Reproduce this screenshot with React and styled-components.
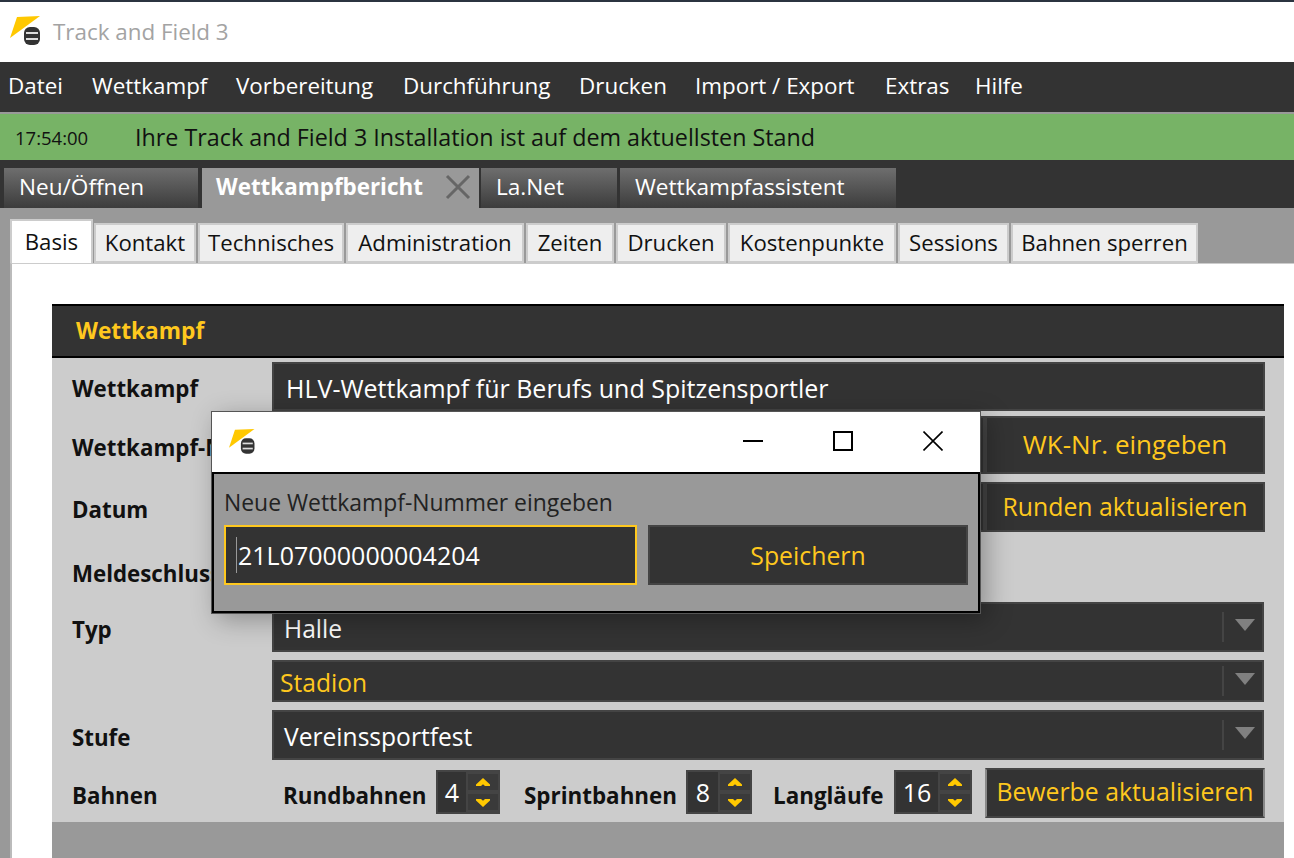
import React from 'react';
import styled, { createGlobalStyle } from 'styled-components';

const Global = createGlobalStyle`
  html, body { margin: 0; padding: 0; background: #fff; overflow: hidden; }
  body { font-family: "Open Sans", "Noto Sans", sans-serif; }
  * { box-sizing: border-box; }
`;

const Page = styled.div`
  position: relative;
  width: 1294px;
  height: 858px;
  overflow: hidden;
  background: #fff;
`;
const TopEdge = styled.div`
  height: 2px;
  background: #2b3440;
`;
const TitleBar = styled.div`
  height: 60px;
  display: flex;
  align-items: center;
  gap: 9px;
  padding: 0 0 2px 10px;
  color: #a3a3a3;
  font-size: 22.4px;
`;
const Menu = styled.div`
  height: 50px;
  background: #333;
  display: flex;
  align-items: center;
  padding-bottom: 4px;
  color: #fff;
  font-size: 22.4px;
`;
const MenuItem = styled.div`
  width: ${(p) => p.$w}px;
  padding-left: 8px;
  white-space: nowrap;
`;
const Status = styled.div`
  height: 48px;
  border-top: 2px solid #999;
  background: #77b366;
  display: flex;
  align-items: center;
  color: #111;
  font-size: 23.3px;
`;
const Clock = styled.div`
  width: 135px;
  padding-left: 15px;
  font-size: 18.5px;
`;
const MainTabs = styled.div`
  height: 48px;
  background: #333;
  display: flex;
  align-items: flex-end;
  padding-left: 4px;
`;
const MainTab = styled.div`
  width: ${(p) => p.$w}px;
  margin-right: ${(p) => p.$gap || 0}px;
  height: 40px;
  display: flex;
  align-items: center;
  justify-content: space-between;
  padding: 0 8px 3px ${(p) => (p.$active ? 14 : 15)}px;
  color: #fff;
  font-size: ${(p) => (p.$active ? 22.4 : 22.6)}px;
  font-weight: ${(p) => (p.$active ? 700 : 400)};
  white-space: nowrap;
  background: ${(p) => (p.$active ? '#999' : 'linear-gradient(#6e6e6e, #3c3c3c)')};
`;
const Body = styled.div`
  height: 650px;
  background: #999;
  padding: 11px 0 0 10px;
`;
const SubTabs = styled.div`
  height: 44px;
  display: flex;
  align-items: flex-end;
  font-size: 22.2px;
`;
const SubTab = styled.div`
  width: ${(p) => p.$w}px;
  height: ${(p) => (p.$active ? 44 : 40)}px;
  margin-right: ${(p) => (p.$active ? 1 : 2)}px;
  background: ${(p) => (p.$active ? '#fff' : '#eee')};
  border: 2px solid #ccc;
  border-bottom: ${(p) => (p.$active ? 0 : '')};
  display: flex;
  align-items: center;
  justify-content: center;
  padding-bottom: 2px;
  color: #111;
  white-space: nowrap;
`;
const Sheet = styled.div`
  height: 595px;
  background: #fff;
  border-top: 1px solid #ccc;
  border-left: 2px solid #bbb;
  padding: 40px 10px 0 40px;
`;
const SectionHead = styled.div`
  height: 54px;
  background: #333;
  border-top: 2px solid #000;
  border-bottom: 2px solid #000;
  display: flex;
  align-items: center;
  padding: 0 0 2px 24px;
  color: #ffc81e;
  font-size: 22.7px;
  font-weight: 700;
`;
const Form = styled.div`
  background: #ccc;
  height: 464px;
  padding: 4px 19px 0 20px;
`;
const FormFooter = styled.div`
  height: 80px;
  background: #999;
`;
const Row = styled.div`
  height: ${(p) => p.$h}px;
  margin-bottom: ${(p) => p.$mb || 0}px;
  display: flex;
  align-items: center;
`;
const Label = styled.div`
  width: 200px;
  flex: none;
  padding-top: 4px;
  font-size: 22.3px;
  font-weight: 700;
  color: #111;
  white-space: nowrap;
`;
const Field = styled.div`
  flex: 1;
  height: 100%;
  background: #333;
  border: 2px solid #444;
  display: flex;
  align-items: center;
  padding: 2px 0 0 12px;
  color: ${(p) => (p.$gold ? '#ffc81e' : '#fff')};
  font-size: 25px;
`;
const ActionButton = styled.div`
  width: ${(p) => p.$w || 280}px;
  height: ${(p) => p.$h || '100%'};
  flex: none;
  margin-left: ${(p) => p.$ml || 0}px;
  padding-bottom: ${(p) => p.$pb || 0}px;
  background: #333;
  border: 2px solid #444;
  border-left-color: ${(p) => (p.$edge ? '#888' : '#444')};
  border-right-color: ${(p) => (p.$edge ? '#888' : '#444')};
  display: flex;
  align-items: center;
  justify-content: center;
  color: #ffc81e;
  font-size: ${(p) => p.$size || 24.8}px;
  white-space: nowrap;
`;
const Select = styled(Field)`
  justify-content: space-between;
  margin-right: 1px;
  padding: 2px 7px 0 ${(p) => (p.$gold ? 6 : 10)}px;
  font-size: 24.6px;
`;
const Arrow = styled.div`
  width: 33px;
  height: 30px;
  margin-top: -2px;
  border-left: 2px solid #444;
  display: flex;
  align-items: center;
  justify-content: flex-end;
  &::after {
    content: '';
    width: 0;
    height: 0;
    margin-bottom: 4px;
    border-left: 10px solid transparent;
    border-right: 10px solid transparent;
    border-top: 12px solid #808080;
  }
`;
const SpinLabel = styled.div`
  width: ${(p) => p.$w}px;
  padding: 4px 0 0 ${(p) => p.$pl}px;
  font-size: 22.4px;
  font-weight: 700;
  color: #111;
  white-space: nowrap;
  flex: none;
`;
const Spin = styled.div`
  width: ${(p) => p.$w || 64}px;
  height: 44px;
  margin-bottom: 2px;
  flex: none;
  background: #444;
  padding: 2px;
  display: flex;
  gap: 2px;
`;
const SpinValue = styled.div`
  flex: 1;
  background: #333;
  color: #fff;
  font-size: 25px;
  display: flex;
  align-items: center;
  justify-content: center;
`;
const SpinButtons = styled.div`
  width: 30px;
  padding: 2px 0;
  display: flex;
  flex-direction: column;
  gap: 4px;
`;
const SpinButton = styled.div`
  flex: 1;
  background: #3a3a3a;
  display: flex;
  align-items: center;
  justify-content: center;
`;
const Dialog = styled.div`
  position: absolute;
  left: 211px;
  top: 411px;
  width: 770px;
  height: 203px;
  border: 1px solid #555;
  background: #fff;
  box-shadow: 6px 6px 24px rgba(0, 0, 0, 0.3);
`;
const DialogTitle = styled.div`
  height: 60px;
  display: flex;
  align-items: center;
  padding-left: 17px;
`;
const WindowButtons = styled.div`
  margin-left: auto;
  display: flex;
  align-items: center;
  padding: 0 37px 2px 0;
  gap: 70px;
`;
const DialogBody = styled.div`
  height: 141px;
  background: #999;
  border: 2px solid #000;
  padding: 15px 10px 0 10px;
`;
const Prompt = styled.div`
  font-size: 22.9px;
  line-height: 27px;
  color: #222;
  margin-bottom: 9px;
`;
const DialogRow = styled.div`
  height: 60px;
  display: flex;
  gap: 11px;
`;
const NumberInput = styled.div`
  width: 414px;
  background: #333;
  border: 2px solid #ffc81e;
  display: flex;
  align-items: center;
  padding-left: 12px;
  color: #fff;
  font-size: 25px;
  position: relative;
  &::before {
    content: '';
    position: absolute;
    left: 10px;
    top: 10px;
    width: 1px;
    height: 36px;
    background: #999;
  }
`;

const Logo = ({ scale = 1 }) => (
  <svg width={34 * scale} height={30 * scale} viewBox="0 0 34 30">
    <polygon points="7,1 30,0 0,22" fill="#ffc800" />
    <rect x="14" y="11" width="16" height="18" rx="6" fill="#333" />
    <rect x="16" y="16" width="12" height="2" fill="#ddd" />
    <rect x="16" y="22" width="12" height="2" fill="#ddd" />
  </svg>
);

const Up = () => (
  <svg width="16" height="9" viewBox="0 0 16 9"><path d="M8 0 L15 6.5 V8 H10 L8 6.2 L6 8 H1 V6.5 Z" fill="#ffc800" /></svg>
);
const Down = () => (
  <svg width="16" height="9" viewBox="0 0 16 9"><path d="M8 9 L15 2.5 V1 H10 L8 2.8 L6 1 H1 V2.5 Z" fill="#ffc800" /></svg>
);

const Spinner = ({ value, w }) => (
  <Spin $w={w}>
    <SpinValue>{value}</SpinValue>
    <SpinButtons>
      <SpinButton><Up /></SpinButton>
      <SpinButton><Down /></SpinButton>
    </SpinButtons>
  </Spin>
);

const menu = [
  ['Datei', 84], ['Wettkampf', 144], ['Vorbereitung', 167], ['Durchführung', 176],
  ['Drucken', 116], ['Import / Export', 190], ['Extras', 90], ['Hilfe', 100],
];
const subTabs = [
  ['Kontakt', 102], ['Technisches', 146], ['Administration', 178], ['Zeiten', 88],
  ['Drucken', 110], ['Kostenpunkte', 168], ['Sessions', 111], ['Bahnen sperren', 187],
];

export default function App() {
  return (
    <Page>
      <Global />
      <TopEdge />
      <TitleBar>
        <Logo />
        <span>Track and Field 3</span>
      </TitleBar>
      <Menu>
        {menu.map(([name, w]) => <MenuItem key={name} $w={w}>{name}</MenuItem>)}
      </Menu>
      <Status>
        <Clock>17:54:00</Clock>
        Ihre Track and Field 3 Installation ist auf dem aktuellsten Stand
      </Status>
      <MainTabs>
        <MainTab $w={194} $gap={4}>Neu/Öffnen</MainTab>
        <MainTab $w={277} $gap={2} $active>
          Wettkampfbericht
          <svg width="26" height="26" viewBox="0 0 26 26"><path d="M2 2 L24 24 M24 2 L2 24" stroke="#666" strokeWidth="3" /></svg>
        </MainTab>
        <MainTab $w={136} $gap={3}>La.Net</MainTab>
        <MainTab $w={276}>Wettkampfassistent</MainTab>
      </MainTabs>
      <Body>
        <SubTabs>
          <SubTab $w={83} $active>Basis</SubTab>
          {subTabs.map(([name, w]) => <SubTab key={name} $w={w}>{name}</SubTab>)}
        </SubTabs>
        <Sheet>
          <SectionHead>Wettkampf</SectionHead>
          <Form>
            <Row $h={49} $mb={5}>
              <Label>Wettkampf</Label>
              <Field>HLV-Wettkampf für Berufs und Spitzensportler</Field>
            </Row>
            <Row $h={58} $mb={8}>
              <Label>Wettkampf-Nr.</Label>
              <Field />
              <ActionButton $pb={2} $size={26}>WK-Nr. eingeben</ActionButton>
            </Row>
            <Row $h={50} $mb={18}>
              <Label>Datum</Label>
              <Field />
              <ActionButton $pb={2}>Runden aktualisieren</ActionButton>
            </Row>
            <Row $h={42} $mb={10}>
              <Label>Meldeschluss</Label>
            </Row>
            <Row $h={50} $mb={8}>
              <Label>Typ</Label>
              <Select>Halle<Arrow /></Select>
            </Row>
            <Row $h={42} $mb={8}>
              <Label />
              <Select $gold>Stadion<Arrow /></Select>
            </Row>
            <Row $h={50} $mb={8}>
              <Label>Stufe</Label>
              <Select>Vereinssportfest<Arrow /></Select>
            </Row>
            <Row $h={50}>
              <Label>Bahnen</Label>
              <SpinLabel $w={164} $pl={11}>Rundbahnen</SpinLabel>
              <Spinner value="4" />
              <SpinLabel $w={186} $pl={24}>Sprintbahnen</SpinLabel>
              <Spinner value="8" w={66} />
              <SpinLabel $w={142} $pl={21}>Langläufe</SpinLabel>
              <Spinner value="16" w={78} />
              <ActionButton $ml={13} $pb={4} $edge>Bewerbe aktualisieren</ActionButton>
            </Row>
          </Form>
          <FormFooter />
        </Sheet>
      </Body>
      <Dialog>
        <DialogTitle>
          <Logo scale={0.85} />
          <WindowButtons>
            <svg width="20" height="2" viewBox="0 0 20 2"><rect width="20" height="2" fill="#000" /></svg>
            <svg width="20" height="20" viewBox="0 0 20 20"><rect x="1" y="1" width="18" height="18" fill="none" stroke="#000" strokeWidth="2" /></svg>
            <svg width="20" height="20" viewBox="0 0 20 20"><path d="M0.5 0.5 L19.5 19.5 M19.5 0.5 L0.5 19.5" stroke="#000" strokeWidth="1.6" /></svg>
          </WindowButtons>
        </DialogTitle>
        <DialogBody>
          <Prompt>Neue Wettkampf-Nummer eingeben</Prompt>
          <DialogRow>
            <NumberInput>21L07000000004204</NumberInput>
            <ActionButton $w={320} $h="60px">Speichern</ActionButton>
          </DialogRow>
        </DialogBody>
      </Dialog>
    </Page>
  );
}
